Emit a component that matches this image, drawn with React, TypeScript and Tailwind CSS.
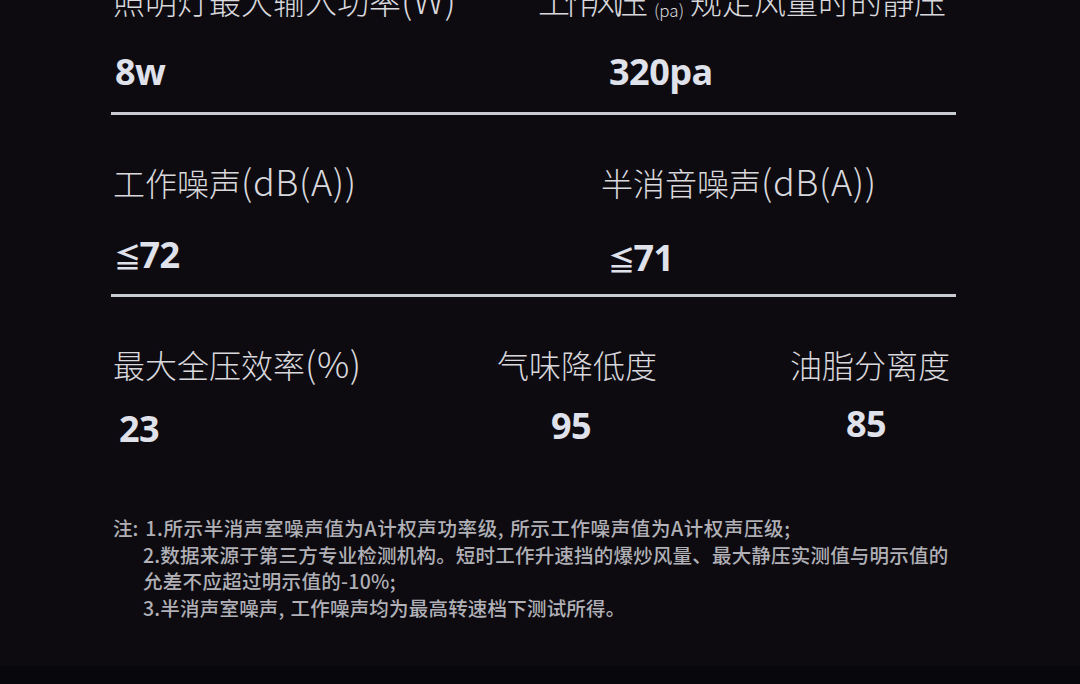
import React from "react";

const labelFont = { fontFamily: '"Noto Sans CJK SC", "Noto Sans", sans-serif' };
const valueFont = { fontFamily: '"Open Sans", "Noto Sans CJK SC", sans-serif' };
const symFont = { fontFamily: '"Noto Sans CJK SC", sans-serif' };

function Label({ children, className = "" }: { children: React.ReactNode; className?: string }) {
  return (
    <div
      className={`text-[32px] leading-[32px] font-light text-[#d8d8dd] whitespace-nowrap ${className}`}
      style={labelFont}
    >
      {children}
    </div>
  );
}

function Lat({ children }: { children: React.ReactNode }) {
  return <span className="text-[36px] leading-[0px] tracking-[0.6px] font-light">{children}</span>;
}

function Value({ children, className = "" }: { children: React.ReactNode; className?: string }) {
  return (
    <div
      className={`text-[36px] leading-[36px] font-bold tracking-[-0.5px] text-[#e0e2eb] whitespace-nowrap ${className}`}
      style={valueFont}
    >
      {children}
    </div>
  );
}

function Le() {
  return (
    <span className="text-[27px] leading-[0px] font-bold ml-[-3px] mr-[-1px]" style={symFont}>
      ≦
    </span>
  );
}

export default function App() {
  return (
    <div className="w-[1080px] h-[684px] overflow-hidden bg-[#0d0b10] relative">
      <div className="flex flex-col">
        {/* Row 1 */}
        <div className="flex mt-[-16px] pl-[113px]">
          <Label className="w-[425px]">
            照明灯最大输入功率<Lat>(W)</Lat>
          </Label>
          <Label className="flex items-start">
            <span className="tracking-[-6px]">工作风压</span>
            <span className="text-[17px] leading-[18px] self-end mb-[-3px] ml-[12px] mr-[6px]">(pa)</span>
            <span>规定风量时的静压</span>
          </Label>
        </div>
        <div className="flex mt-[38px] pl-[115px]">
          <Value className="w-[494px]">8w</Value>
          <Value>320pa</Value>
        </div>
        <div className="ml-[111px] w-[845px] h-[3px] bg-[#c9cbd3] mt-[22px]" />

        {/* Row 2 */}
        <div className="flex mt-[51px] pl-[113px]">
          <Label className="w-[488px]">
            工作噪声<Lat>(dB(A))</Lat>
          </Label>
          <Label>
            半消音噪声<Lat>(dB(A))</Lat>
          </Label>
        </div>
        <div className="flex mt-[39px] pl-[117px] items-start">
          <Value className="w-[494px]">
            <Le />72
          </Value>
          <Value className="mt-[3px]">
            <Le />71
          </Value>
        </div>
        <div className="ml-[111px] w-[845px] h-[3px] bg-[#c9cbd3] mt-[18px]" />

        {/* Row 3 */}
        <div className="flex mt-[51px] pl-[113px]">
          <Label className="w-[384px]">
            最大全压效率<Lat>(%)</Lat>
          </Label>
          <Label className="w-[293px]">气味降低度</Label>
          <Label>油脂分离度</Label>
        </div>
        <div className="flex mt-[26px] pl-[119px] items-start">
          <Value className="w-[432px] mt-[5px]">23</Value>
          <Value className="w-[295px] mt-[2px]">95</Value>
          <Value>85</Value>
        </div>

        {/* Notes */}
        <div
          className="mt-[68px] text-[19.5px] leading-[26.5px] font-medium text-[#b0b0b6] whitespace-nowrap"
          style={labelFont}
        >
          <div className="pl-[113px]">
            注:
            <span className="ml-[7px] tracking-[0.6px]">1.所示半消声室噪声值为A计权声功率级,</span>
            <span className="ml-[6px] tracking-[0.6px]">所示工作噪声值为A计权声压级;</span>
          </div>
          <div className="pl-[143px] tracking-[0.2px]">
            2.数据来源于第三方专业检测机构。短时工作升速挡的爆炒风量、最大静压实测值与明示值的
          </div>
          <div className="pl-[143px] tracking-[0.3px]">允差不应超过明示值的-10%;</div>
          <div className="pl-[143px] tracking-[0.2px]">
            3.半消声室噪声,<span className="ml-[6px]">工作噪声均为最高转速档下测试所得。</span>
          </div>
        </div>
      </div>
      <div className="absolute left-0 right-0 bottom-0 h-[18px] bg-[#08070b]" />
    </div>
  );
}
